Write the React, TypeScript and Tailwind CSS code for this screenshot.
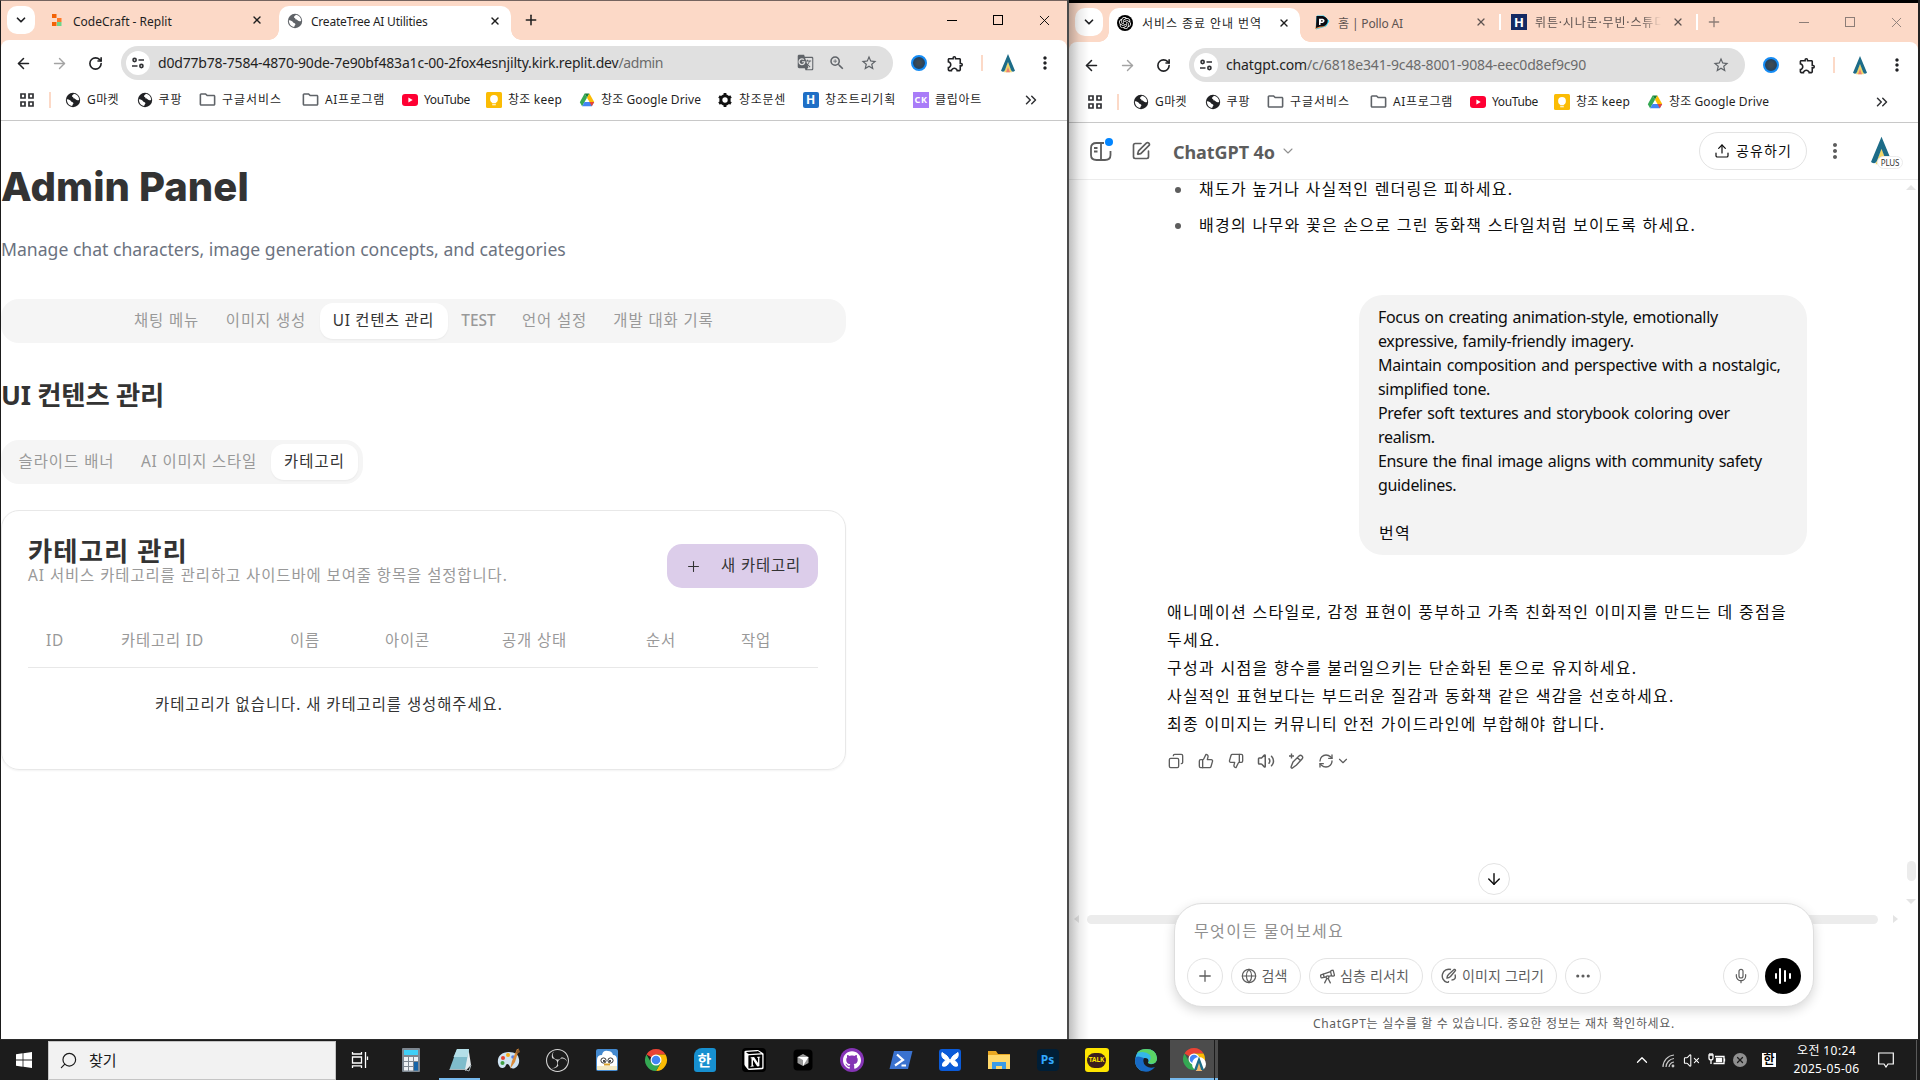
import React from "react";
import {
  ArrowDown, ArrowLeft, ArrowRight, ChevronDown, ChevronUp, Copy, Ellipsis, Globe, Mic,
  Plus, RefreshCw, RotateCw, Search, SquarePen, Telescope, ThumbsDown, ThumbsUp, Upload,
  Volume2, VolumeX, X, ChevronsRight,
} from "lucide-react";
import { MdGTranslate, MdMoreVert, MdOutlineExtension, MdOutlineFolder, MdStarBorder, MdZoomIn } from "react-icons/md";
import { SiOpenai, SiNotion, SiGithub, SiObsstudio } from "react-icons/si";

type Box = { className?: string };

const GlobeDisc = ({ className = "text-[#202124]" }: Box) => (
  <svg viewBox="0 0 16 16" className={`size-4 ${className}`}>
    <circle cx="8" cy="8" r="7.2" fill="currentColor" />
    <path d="M1.8 7.2C4 7 5.2 8 6.2 9.4c1 1 2.3.6 2.2 2-.1 1-1.2 1-1.2 2.6C4.200 13.600 1.900 11 1.800 7.200Z" fill="#fff" />
    <path d="M9 1.800C8 2.800 7 3 7 4.200c0 1 1.600.6 1.500 1.800-.1 1.100 1.800.8 2.400 1.500 1 1 2 .7 3.300.4C14 4.600 12 2.200 9 1.800Z" fill="#fff" />
  </svg>
);

const SiteInfo = () => (
  <svg viewBox="0 0 14 14" className="size-3.5" fill="none" stroke="#303134" strokeWidth="1.600">
    <circle cx="3.600" cy="4" r="1.600" />
    <path d="M7.500 4H13M1 10h5.500" />
    <circle cx="10.400" cy="10" r="1.600" />
  </svg>
);

const AppsGrid = () => (
  <svg viewBox="0 0 14 14" className="size-3.5" fill="none" stroke="#303134" strokeWidth="1.700">
    <path d="M1 1h4v4H1zM9 1h4v4H9zM1 9h4v4H1zM9 9h4v4H9z" />
  </svg>
);

const ALogo = ({ className = "w-3.5 h-[19px]" }: Box) => (
  <svg viewBox="0 0 14 19" className={className}>
    <path d="M7 7.500 11 18.300H3Z" fill="#f0d66a" />
    <path d="M7 13 9 18.300H5Z" fill="#ee8074" />
    <path d="M7 0 14 16.800Q11 18.800 10 16L7 8 4 16Q3 18.800 0 16.800Z" fill="#1d6c88" />
  </svg>
);

const YouTube = () => (
  <svg viewBox="0 0 16 12" className="h-3 w-4">
    <rect width="16" height="12" rx="3" fill="#ff0033" />
    <path d="M6.400 3.500v5L10.700 6Z" fill="#fff" />
  </svg>
);

const Keep = () => (
  <svg viewBox="0 0 16 16" className="size-4">
    <rect width="16" height="16" rx="1.500" fill="#fbbc04" />
    <circle cx="8" cy="7" r="3.900" fill="#fff" />
    <path d="M6.200 10h3.600v1.300H6.200zM6.200 12.200h3.600v1.100H6.200z" fill="#fff" />
  </svg>
);

const Drive = () => (
  <svg viewBox="0 0 16 16" className="size-4">
    <path d="M5.600 1.500h4.800L8 5.700Z" fill="#188038" />
    <path d="M5.600 1.500 8 5.700 3.100 14.300.8 10.300Z" fill="#34a853" />
    <path d="M10.400 1.500 15.200 10H10.500L8 5.700Z" fill="#fbbc04" />
    <path d="M5.500 10h9.700l-2.400 4.300H3.100Z" fill="#4285f4" />
    <path d="M10.500 10h4.700l-2.400 4.300Z" fill="#ea4335" />
  </svg>
);

const Gear = () => (
  <svg viewBox="0 0 16 16" className="size-4" fill="none" stroke="#111">
    <circle cx="8" cy="8" r="4.200" strokeWidth="3" />
    <path d="M8 1v3M8 12v3M2 4.500l2.500 1.500M11.500 10l2.500 1.500M14 4.500 11.500 6M4.500 10 2 11.500" strokeWidth="2.800" />
  </svg>
);

const Letter = ({ children, className = "" }: { children: string; className?: string }) => (
  <span className={`flex size-4 items-center justify-center font-bold leading-none text-white ${className}`}>{children}</span>
);

const Folder = () => <MdOutlineFolder className="size-[19px] -ml-1 -mr-0.5 shrink-0 text-[#5f6368]" />;

const bookmarks: { label: string; icon: React.ReactNode; cls: string }[] = [
  { label: "G마켓", icon: <GlobeDisc />, cls: "w-[71.500px] tracking-[0.390px]" },
  { label: "쿠팡", icon: <GlobeDisc />, cls: "w-[63.500px] tracking-[0.960px]" },
  { label: "구글서비스", icon: <Folder />, cls: "w-[103px] tracking-[0.960px]" },
  { label: "AI프로그램", icon: <Folder />, cls: "w-[99px] tracking-[0.680px]" },
  { label: "YouTube", icon: <YouTube />, cls: "w-[84px] tracking-[-0.360px]" },
  { label: "창조 keep", icon: <Keep />, cls: "w-[93px] tracking-[0.210px]" },
  { label: "창조 Google Drive", icon: <Drive />, cls: "w-[138px] tracking-[0.100px]" },
  { label: "창조문센", icon: <Gear />, cls: "w-[86px] tracking-[0.710px]" },
  { label: "창조트리기획", icon: <Letter className="rounded-[2px] bg-[#1f6fc6] text-[12px]">H</Letter>, cls: "w-[110px] tracking-[0.790px]" },
  { label: "클립아트", icon: <Letter className="bg-[#a97cf8] text-[9px]">CK</Letter>, cls: "w-[75px] tracking-[0.710px]" },
];

const BookmarkBar = ({ count }: { count: number }) => (
  <div className="flex h-10 items-center border-b border-[#c8c8c8] pb-0.5 text-[12px] text-[#1f1f1f]">
    <div className="ml-[19px]"><AppsGrid /></div>
    <div className="ml-[15px] mr-3.5 h-4 w-0.5 bg-[#fcd9c7]" />
    {bookmarks.slice(0, count).map((b) => (
      <div key={b.label} className={`flex shrink-0 items-center gap-1.5 whitespace-nowrap ${b.cls}`}>
        <span className="flex w-4 shrink-0 items-center justify-center">{b.icon}</span>
        <span>{b.label}</span>
      </div>
    ))}
    <ChevronsRight className="ml-auto mr-[27px] size-[18px] text-[#303134]" strokeWidth={2} />
  </div>
);

const Extensions = () => (
  <>
    <div className="ml-2 flex w-9 justify-center">
      <div className="size-4 rounded-full border-2 border-[#158cf5] bg-[radial-gradient(circle,#3f4a53_20%,#1d4164_80%)]" />
    </div>
    <div className="flex w-9 justify-center pl-px"><MdOutlineExtension className="size-[19px] text-[#202124]" /></div>
    <div className="ml-2 h-4 w-0.5 bg-[#fcd9c7]" />
    <div className="ml-[7px] flex w-9 justify-center"><ALogo /></div>
    <div className="ml-px flex w-9 justify-center"><MdMoreVert className="size-5 text-[#202124]" /></div>
  </>
);

const Toolbar = ({ pill, children }: { pill: string; children: React.ReactNode }) => (
  <div className="flex h-[46px] items-center">
    <div className="ml-1 flex w-9 justify-center"><ArrowLeft className="size-[17px] text-[#202124]" strokeWidth={2.200} /></div>
    <div className="flex w-9 justify-center"><ArrowRight className="size-[17px] text-[#a3a3a3]" strokeWidth={2} /></div>
    <div className="flex w-9 justify-center"><RotateCw className="size-[15px] text-[#202124]" strokeWidth={2.600} /></div>
    <div className={`ml-2 flex h-[34px] items-center rounded-full bg-[#e0e0e0] pl-[5px] pr-2 text-[14px] ${pill}`}>
      <span className="mr-2 flex size-6 items-center justify-center rounded-full bg-white"><SiteInfo /></span>
      {children}
    </div>
    <Extensions />
  </div>
);

const TabSearch = () => (
  <div className="ml-1.5 mt-[5px] flex size-7 items-center justify-center rounded-[10px] bg-white">
    <ChevronDown className="size-3.5 text-[#202124]" strokeWidth={3} />
  </div>
);

const ActiveTab = ({ className, children }: { className: string; children: React.ReactNode }) => (
  <div className={`relative mt-[5px] flex h-[34px] items-center rounded-t-[10px] bg-white pb-[5px] pl-2 pr-[10px] ${className}`}>
    <span className="absolute -left-2.5 bottom-0 size-2.5 bg-[radial-gradient(circle_at_top_left,transparent_9.500px,#fff_10px)]" />
    {children}
    <span className="absolute -right-2.5 bottom-0 size-2.5 bg-[radial-gradient(circle_at_top_right,transparent_9.500px,#fff_10px)]" />
  </div>
);

const WindowButtons = ({ className }: { className: string }) => (
  <div className={`ml-auto flex h-[38px] items-center ${className}`}>
    <span className="flex w-[46.500px] justify-center"><span className="h-px w-2.5 bg-current" /></span>
    <span className="flex w-[46.500px] justify-center"><span className="size-2.5 border border-current" /></span>
    <span className="flex w-[46.500px] justify-center"><X className="size-[17px]" strokeWidth={1.300} /></span>
  </div>
);

const LeftWindow = () => (
  <div className="flex w-[1067px] flex-col border-l border-t border-l-[#1b1b1b] border-t-[#75645f] bg-white">
    <div className="flex h-[39px] bg-[#fcd9c7] text-[12px] text-[#1f1f1f]">
      <TabSearch />
      <div className="flex h-[38px] w-[244px] items-center pl-4 pr-4">
        <svg viewBox="0 0 12 14" className="h-3.5 w-3">
          <path d="M1 1h4.500v4H1zM1 9h4.500v4H1z" fill="#f26207" />
          <path d="M6 5h4.500v4H6z" fill="#ff7a2a" />
          <path d="M6 9h4.500v4H6z" fill="#6ed58a" />
        </svg>
        <span className="ml-2.5 mt-[3px]">CodeCraft - Replit</span>
        <X className="ml-auto size-3" strokeWidth={2.800} />
      </div>
      <ActiveTab className="w-[232px]">
        <GlobeDisc className="text-[#5f6368]" />
        <span className="ml-2 mt-[3px] tracking-[-0.220px]">CreateTree AI Utilities</span>
        <X className="ml-auto size-3" strokeWidth={2.800} />
      </ActiveTab>
      <div className="ml-1.5 flex h-[38px] w-7 items-center justify-center"><Plus className="size-4" strokeWidth={2.300} /></div>
      <WindowButtons className="-mr-px text-black" />
    </div>
    <div className="bg-[#fcd9c7]">
      <div className="rounded-t-[8px] bg-white">
        <Toolbar pill="w-[772px]">
          <span className="tracking-[-0.180px] text-[#1f1f1f]">d0d77b78-7584-4870-90de-7e90bf483a1c-00-2fox4esnjilty.kirk.replit.dev</span>
          <span className="tracking-[-0.400px] text-[#6b6b6b]">/admin</span>
          <span className="ml-auto flex text-[#5f6368]">
            <span className="flex w-8 justify-center"><MdGTranslate className="size-[17px]" /></span>
            <span className="flex w-8 justify-center"><MdZoomIn className="size-[18px]" /></span>
            <span className="flex w-8 justify-center"><MdStarBorder className="size-[18px]" /></span>
          </span>
        </Toolbar>
      </div>
    </div>
    <div className="-mt-[5px]"><BookmarkBar count={10} /></div>
    <AdminPage />
  </div>
);

const mainTabs = [
  { label: "채팅 메뉴", cls: "w-[92px] tracking-[0.870px]" },
  { label: "이미지 생성", cls: "w-[107px] tracking-[0.920px]" },
  { label: "UI 컨텐츠 관리", cls: "w-[128px] tracking-[0.680px]", on: true },
  { label: "TEST", cls: "w-[62px] font-medium" },
  { label: "언어 설정", cls: "w-[90px] tracking-[0.920px]" },
  { label: "개발 대화 기록", cls: "w-[128px] tracking-[0.920px]" },
];
const subTabs = [
  { label: "슬라이드 배너", cls: "w-[121px] tracking-[1.010px]" },
  { label: "AI 이미지 스타일", cls: "w-[144px] tracking-[0.800px]" },
  { label: "카테고리", cls: "w-[87px] tracking-[1.090px]", on: true },
];
const columns = ["ID", "카테고리 ID", "이름", "아이콘", "공개 상태", "순서", "작업"];

const Tab = ({ label, cls, on }: { label: string; cls: string; on?: boolean }) => (
  <div className={`flex h-9 items-center justify-center whitespace-nowrap rounded-[13px] ${on ? "bg-white text-[#333] shadow-xs" : ""} ${cls}`}>{label}</div>
);

const AdminPage = () => (
  <main className="flex flex-col text-[15.400px] text-[#999]">
    <h1 className="mt-[46px] flex h-10 items-center font-[Inter] text-[40px] font-extrabold tracking-[0.050px] text-[#333]">Admin Panel</h1>
    <p className="mt-[29px] flex h-7 items-center text-[17.600px] text-[#6b7280]">Manage chat characters, image generation concepts, and categories</p>
    <div className="mt-[35px] flex h-11 w-[845px] items-center justify-center rounded-[18px] bg-[#f5f5f5] pl-px">
      {mainTabs.map((t) => <Tab key={t.label} {...t} />)}
    </div>
    <h2 className="mt-8 flex h-10 items-center text-[26.400px] font-bold tracking-[-0.250px] text-[#333]">UI 컨텐츠 관리</h2>
    <div className="mt-[25px] flex h-11 w-[362px] items-center rounded-[18px] bg-[#f5f5f5] pl-[5px]">
      {subTabs.map((t) => <Tab key={t.label} {...t} />)}
    </div>
    <section className="mt-[26px] h-[260px] w-[845px] rounded-[18px] border border-[#e8e8e8] pl-[26px] pr-[27px] shadow-xs">
      <div className="flex items-start justify-between">
        <div className="pt-[26px]">
          <h3 className="flex h-7 items-center text-[26.400px] font-bold tracking-[1.050px] text-[#333]">카테고리 관리</h3>
          <p className="flex h-[22px] items-center tracking-[0.950px]">AI 서비스 카테고리를 관리하고 사이드바에 보여줄 항목을 설정합니다.</p>
        </div>
        <div className="mt-[33px] flex h-11 w-[151px] items-center rounded-[15px] bg-[#dccdea] pl-[18px] tracking-[0.870px] text-[#333]">
          <Plus className="mr-[19px] size-[17px]" strokeWidth={1.500} />
          <span>새 카테고리</span>
        </div>
      </div>
      <div className="mt-[25px] grid h-[55px] grid-cols-[75px_169px_95px_117px_144px_95px_auto] items-center border-b border-[#e8e8e8] pl-[18px] pt-0.5 tracking-[0.870px]">
        {columns.map((c) => <span key={c}>{c}</span>)}
      </div>
      <p className="mt-[25px] flex h-6 items-center pl-[127px] tracking-[0.970px] text-[#333]">카테고리가 없습니다. 새 카테고리를 생성해주세요.</p>
    </section>
  </main>
);

const RightWindow = () => (
  <div className="relative flex w-[849px] flex-col border-t-[3px] border-t-black bg-white">
    <div className="flex h-[39px] bg-[#fcd9c7] text-[12px] text-[#1f1f1f]">
      <TabSearch />
      <div className="w-1.5" />
      <ActiveTab className="w-[191px]">
        <span className="flex size-4 items-center justify-center rounded-full bg-black text-white"><SiOpenai className="size-3" /></span>
        <span className="ml-[9px] mt-[3px] whitespace-nowrap tracking-[0.940px]">서비스 종료 안내 번역</span>
        <X className="ml-auto size-3 shrink-0" strokeWidth={2.800} />
      </ActiveTab>
      <div className="flex h-[38px] w-[199px] items-center pl-3.5 pr-3 text-[#5e5451]">
        <svg viewBox="0 0 16 15" className="h-[15px] w-4">
          <path d="M3 1h7l5 5-3 5-10 3Z" fill="#38d5f5" stroke="#38d5f5" strokeLinejoin="round" />
          <path d="M1 14 3 7l9 4Z" fill="#ff8a3d" />
          <path d="M2.500 1h6.500Q15 3 13.500 7.500T6 11.500L2 13Z" fill="#0b0b12" />
          <path d="M5 10V3.800h3.600q2 .4 2 2t-2 2.200H6.500V10Z" fill="#fff" />
          <path d="M7 5.200h1.700v1.300H7z" fill="#111" />
        </svg>
        <span className="ml-2 mt-[3px] tracking-[-0.140px]">홈 | Pollo AI</span>
        <X className="ml-auto size-3" strokeWidth={2.500} />
      </div>
      <div className="mt-[11px] h-4 w-0.5 bg-white" />
      <div className="flex h-[38px] w-[195px] items-center pl-2.5 pr-3 text-[#5e5451]">
        <Letter className="bg-[#142a63] text-[13px]">H</Letter>
        <span className="ml-2 mt-0.5 w-[126px] overflow-hidden whitespace-nowrap leading-5 tracking-[0.850px] [mask-image:linear-gradient(90deg,#000_85%,transparent)]">뤼튼·시나몬·무빈·스튜디</span>
        <X className="ml-auto size-3" strokeWidth={2.500} />
      </div>
      <div className="mt-[11px] h-4 w-0.5 bg-white" />
      <div className="ml-1 flex h-[38px] w-6 items-center justify-center text-[#8c7d77]"><Plus className="size-4" strokeWidth={2} /></div>
      <WindowButtons className="-mr-0.5 text-[#8c7d77]" />
    </div>
    <div className="bg-[#fcd9c7]">
      <div className="rounded-t-[8px] bg-white">
        <Toolbar pill="w-[556px]">
          <span className="tracking-[-0.140px] text-[#6b6b6b]"><span className="text-[#1f1f1f]">chatgpt.com</span>/c/6818e341-9c48-8001-9084-eec0d8ef9c90</span>
          <span className="ml-auto flex w-8 justify-center text-[#5f6368]"><MdStarBorder className="size-[18px]" /></span>
        </Toolbar>
      </div>
    </div>
    <div className="-mt-[5px]"><BookmarkBar count={7} /></div>
    <ChatPage />
    <div className="absolute inset-y-0 left-0 w-5 bg-gradient-to-r from-black/25 via-black/8 to-transparent" />
  </div>
);

const promptText = [
  "Focus on creating animation-style, emotionally",
  "expressive, family-friendly imagery.",
  "Maintain composition and perspective with a nostalgic,",
  "simplified tone.",
  "Prefer soft textures and storybook coloring over",
  "realism.",
  "Ensure the final image aligns with community safety",
  "guidelines.",
];
const answer = [
  "애니메이션 스타일로, 감정 표현이 풍부하고 가족 친화적인 이미지를 만드는 데 중점을",
  "두세요.",
  "구성과 시점을 향수를 불러일으키는 단순화된 톤으로 유지하세요.",
  "사실적인 표현보다는 부드러운 질감과 동화책 같은 색감을 선호하세요.",
  "최종 이미지는 커뮤니티 안전 가이드라인에 부합해야 합니다.",
];

const Bullet = ({ text, className }: { text: string; className: string }) => (
  <li className={`flex items-center whitespace-nowrap ${className}`}>
    <span className="ml-[106px] mr-[18px] mt-px size-1.5 rounded-full bg-[#5d5d5d]" />
    {text}
  </li>
);

const Chip = ({ className, children }: { className: string; children: React.ReactNode }) => (
  <div className={`flex h-9 items-center justify-center rounded-full border border-[#e3e3e3] ${className}`}>{children}</div>
);

const ChatPage = () => (
  <main className="relative flex grow flex-col text-[16px] text-[#0d0d0d]">
    <header className="flex h-[57px] items-center border-b border-[#ececec] text-[#5d5d5d]">
      <div className="relative ml-[21px]">
        <svg viewBox="0 0 22 19" className="h-[19px] w-[22px]" fill="none" stroke="currentColor" strokeWidth="1.800">
          <path d="M14 1H6.500Q1 1 1 6v7q0 5 5.500 5H15q5.500 0 5.500-5V9" />
          <path d="M11 1v17M4 6h3.500M4 9.500h3.500" />
        </svg>
        <span className="absolute -right-px -top-1 size-2 rounded-full bg-[#0285ff]" />
      </div>
      <SquarePen className="ml-[19px] size-5" strokeWidth={2} />
      <h1 className="ml-[22px] mt-0.5 whitespace-nowrap text-[18px] font-bold tracking-[-0.070px]">ChatGPT 4o</h1>
      <ChevronDown className="ml-[5px] size-4 text-[#8f8f8f]" strokeWidth={1.600} />
      <Chip className="ml-auto h-[38px] w-[108px] gap-1.5 text-[14px] tracking-[1.120px] text-[#0d0d0d]">
        <Upload className="size-4" strokeWidth={1.800} />공유하기
      </Chip>
      <MdMoreVert className="ml-4 size-6" />
      <div className="relative ml-6 mr-[26px]">
        <ALogo className="h-[30px] w-[21px]" />
        <span className="absolute left-1.5 top-5 flex h-[13px] w-[26px] items-center justify-center rounded-full border border-[#ececec] bg-white text-[8px] leading-none tracking-[-0.200px] text-[#333]">PLUS</span>
      </div>
    </header>

    <ul className="-mt-px">
      <Bullet text="채도가 높거나 사실적인 렌더링은 피하세요." className="h-5 tracking-[1.230px]" />
      <Bullet text="배경의 나무와 꽃은 손으로 그린 동화책 스타일처럼 보이도록 하세요." className="mt-4 h-5 tracking-[1.280px]" />
    </ul>

    <div className="ml-[290px] mt-[60px] h-[260px] w-[448px] rounded-[24px] bg-[#f3f3f3] pl-[19px] pt-2.5 leading-6 tracking-[-0.330px] [word-spacing:1.200px]">
      {promptText.map((l) => <p key={l} className="whitespace-nowrap">{l}</p>)}
      <p className="pl-px pt-6 tracking-[1.280px]">번역</p>
    </div>

    <div className="ml-[98px] mt-[43px] leading-7 tracking-[1.280px]">
      {answer.map((l) => <p key={l} className="whitespace-nowrap">{l}</p>)}
    </div>
    <div className="ml-[99px] mt-[13px] flex h-5 items-center gap-3.5 text-[#5d5d5d]">
      <Copy className="size-4 -scale-x-100" strokeWidth={2} />
      <ThumbsUp className="size-4" strokeWidth={2} />
      <ThumbsDown className="size-4" strokeWidth={2} />
      <Volume2 className="size-[18px] -mx-px" strokeWidth={2} />
      <svg viewBox="0 0 16 16" className="size-4" fill="none" stroke="currentColor" strokeWidth="1.400">
        <path d="M3.500.5v5M1 3h5" />
        <path d="m5 9 6-6q1.500-1.500 3 0t0 3L8.500 12 4 15.200Q2.800 15 3.200 13.500Z M9.500 4.800l2.800 2.800" />
      </svg>
      <span className="flex items-center gap-0.5">
        <RefreshCw className="size-4" strokeWidth={2} />
        <ChevronDown className="size-3.5" strokeWidth={2} />
      </span>
    </div>

    <div className="ml-[409px] mt-[92px] flex size-8 items-center justify-center rounded-full border border-[#e3e3e3]">
      <ArrowDown className="size-[18px]" strokeWidth={1.900} />
    </div>

    <div className="relative z-10 ml-[105px] mt-2 flex h-[104px] w-[640px] flex-col rounded-[28px] border border-[#dedede] bg-white px-3 shadow-[0_4px_12px_rgba(0,0,0,0.16)]">
      <p className="mt-[15px] flex h-6 items-center pl-[7px] tracking-[1.350px] text-[#8f8f8f]">무엇이든 물어보세요</p>
      <div className="mt-[15px] flex items-center text-[14px] text-[#5d5d5d]">
        <Chip className="w-9"><Plus className="size-[18px]" strokeWidth={1.700} /></Chip>
        <Chip className="ml-2 w-[70px] gap-[5px] pr-1"><Globe className="size-4" strokeWidth={1.800} />검색</Chip>
        <Chip className="ml-2 w-[114px] gap-1 pr-1 tracking-[0.160px]"><Telescope className="size-[17px]" strokeWidth={1.800} />심층 리서치</Chip>
        <Chip className="ml-2 w-[126px] gap-[5px] pr-[3px] tracking-[0.150px]">
          <svg viewBox="0 0 16 16" className="size-4" fill="none" stroke="currentColor" strokeWidth="1.400">
            <path d="M10 1.500A6.600 6.600 0 1 0 6 14.400q1.800.2 1.400-1.400M14 6.500Q15.500 12 10.500 12" />
            <path d="M6 10q0-2 1.500-3.500L13 1.500q1.500-.5 1.500 1L9.500 8.500Q8 10 6 10Z M4.500 6.500h.1" />
          </svg>
          이미지 그리기
        </Chip>
        <Chip className="ml-2 w-9"><Ellipsis className="size-[18px]" strokeWidth={2.200} /></Chip>
        <Chip className="ml-auto w-9"><Mic className="size-4" strokeWidth={1.800} /></Chip>
        <div className="ml-1.5 flex size-9 items-center justify-center gap-[2px] rounded-full bg-black">
          <span className="h-1.5 w-[2px] rounded-full bg-white" />
          <span className="h-4 w-[2px] rounded-full bg-white" />
          <span className="mx-px h-3 w-[2px] rounded-full bg-white" />
          <span className="h-1.5 w-[2px] rounded-full bg-white" />
        </div>
      </div>
    </div>
    <p className="mt-[7px] flex h-5 items-center justify-center pl-px text-[12px] tracking-[0.700px] text-[#5d5d5d]">ChatGPT는 실수를 할 수 있습니다. 중요한 정보는 재차 확인하세요.</p>

    <div className="absolute bottom-[115px] left-[5px] flex h-2.5 w-[824px] items-center">
      <span className="border-y-4 border-r-[5px] border-y-transparent border-r-[#e4e4e4]" />
      <span className="ml-2 h-[9px] w-[791px] rounded-full bg-[#ececec]" />
      <span className="ml-auto border-y-4 border-l-[5px] border-y-transparent border-l-[#e4e4e4]" />
    </div>
    <div className="absolute right-0.5 top-[62px] flex h-[719px] w-[10px] flex-col items-center">
      <span className="border-x-[5px] border-b-[5px] border-x-transparent border-b-[#e4e4e4]" />
      <span className="mt-auto h-5 w-[9px] rounded-full bg-[#ececec]" />
      <span className="mt-[18px] border-x-[5px] border-t-[5px] border-x-transparent border-t-[#e4e4e4]" />
    </div>
  </main>
);

const Chrome = ({ badge }: { badge?: boolean }) => (
  <svg viewBox="0 0 24 24" className="size-6">
    <path d="M12 12 2.470 6.500A11 11 0 0 1 21.530 6.500H12Z" fill="#ea4335" />
    <path d="M21.530 6.500A11 11 0 0 1 12 23L16.760 14.750 12 6.500Z" fill="#fbbc04" />
    <path d="M12 23A11 11 0 0 1 2.470 6.500L7.240 14.750H16.760Z" fill="#34a853" />
    <circle cx="12" cy="12" r="5.500" fill="#fff" />
    <circle cx="12" cy="12" r="4.300" fill="#4285f4" />
    {badge && (
      <g>
        <circle cx="17" cy="17" r="7" fill="#fff" />
        <path d="M17 13.500 19.800 24H14.200Z" fill="#f0b66a" />
        <path d="m17 9.500 5 13.500h-2.800L17 16l-2.200 7H12Z" fill="#1d6c88" />
      </g>
    )}
  </svg>
);

const Ico = ({ children }: { children: React.ReactNode }) => <svg viewBox="0 0 24 24" className="size-6">{children}</svg>;

const apps: React.ReactNode[] = [
  <Ico>
    <rect x="3" y="0" width="18" height="24" rx="1" fill="#7d8790" />
    <rect x="5" y="2" width="14" height="5" fill="#3fd0f7" />
    <path d="M5 9h4v4H5zM10 9h4v4h-4zM15 9h4v4h-4zM5 14h4v4H5zM10 14h4v4h-4zM5 19h4v3.500H5zM10 19h4v3.500h-4z" fill="#eef2f5" />
    <path d="M15 14h4v8.500h-4z" fill="#1565a9" />
  </Ico>,
  <Ico>
    <path d="M9 1h11.500L23 17l-5.500 6Z" fill="#e4ebee" />
    <path d="M9 1h12L17 21.500H1.500Z" fill="#7fbccb" />
    <path d="M9 1h12l-1.500 8H5.500Z" fill="#b4dfe8" />
    <path d="M1.500 21.500H17L21 23l2-6" fill="none" stroke="#a9b4b8" />
  </Ico>,
  <Ico>
    <path d="M12 4C4 4 0 9 1 15q1 5.500 5 5 2.500-.5 3-3 1-2 3 0 2 5 6 3 5-3 4-9Q21 4 12 4Z" fill="#cfe4f3" />
    <circle cx="6" cy="10" r="2" fill="#e5432f" /><circle cx="11" cy="7" r="2" fill="#f5b021" />
    <circle cx="5.500" cy="15" r="2" fill="#3f9f45" /><circle cx="16" cy="9" r="1.800" fill="#5b7fe0" />
    <path d="m22 1-2 0-5 12-2 8 5-7Z" fill="#d98b3b" />
    <path d="m21.500 0 1.500 4-3 2-1-1.500Z" fill="#8a5a2b" />
  </Ico>,
  <SiObsstudio className="size-[23px] text-[#d6d6d6]" />,
  <Ico>
    <rect x="1" y="1" width="22" height="22" rx="2" fill="#4389cf" />
    <path d="M2 12Q2 7 7 7q1-5 6-4 4 0 5 4 4 0 4 5v6H2Z" fill="#fff" />
    <circle cx="8.500" cy="12.500" r="2.600" fill="#fff" stroke="#333" /><circle cx="15.500" cy="12.500" r="2.600" fill="#fff" stroke="#333" />
    <circle cx="9" cy="13" r="1" fill="#111" /><circle cx="15" cy="13" r="1" fill="#111" />
    <path d="M2 18h20v4H2z" fill="#f4e9c2" /><path d="M9 16.500h6" stroke="#d8a028" strokeWidth="2" />
  </Ico>,
  <Chrome />,
  <span className="flex h-6 w-[22px] items-center justify-center rounded-[3px] rounded-tl-[8px] bg-[#1790d0] text-[15px] font-bold leading-none text-white">한</span>,
  <span className="flex size-6 items-center justify-center rounded-[4px] bg-black"><SiNotion className="size-5 text-white" /></span>,
  <Ico>
    <rect x="2.500" y="1.500" width="19" height="21" rx="4" fill="#000" />
    <path d="m12 6 5.500 3v6L12 18l-5.500-3V9Z" fill="#9a9a9a" />
    <path d="M6.500 9h11L12 18v-6Z" fill="#fff" />
  </Ico>,
  <span className="flex size-6 items-center justify-center rounded-full bg-[#8534b5]"><SiGithub className="size-[18px] text-white" /></span>,
  <Ico>
    <path d="M5 3h18.500L19 21H.5Z" fill="#3a72cf" />
    <path d="m8 6.500 6 5.500-8 5.500M12.500 17.500H17" fill="none" stroke="#fff" strokeWidth="2.200" />
  </Ico>,
  <Ico>
    <rect x="1" y="1" width="22" height="22" rx="3" fill="#0b5bd8" />
    <path d="M12 12.500Q10 7.500 4 4.500q-1.500 6.500 5 7.500-5 1.500-4.500 6Q9.500 19.500 12 12.500Zm0 0Q14 7.500 20 4.500q1.500 6.500-5 7.500 5 1.500 4.500 6Q14.500 19.500 12 12.500Z" fill="#fff" stroke="#fff" />
  </Ico>,
  <Ico>
    <path d="M1 3h8l2 3h12v15H1Z" fill="#e9a823" /><path d="M1 7h22v14H1Z" fill="#ffd86b" />
    <path d="M5 21v-7h14v7h-4v-3H9v3Z" fill="#3b9be6" />
  </Ico>,
  <span className="flex size-[22px] items-center justify-center rounded-[4px] bg-[#001e36] text-[12px] font-bold leading-none text-[#31a8ff]">Ps</span>,
  <span className="flex size-6 items-center justify-center rounded-[3px] bg-[#fee500]">
    <span className="flex h-[15px] w-[19px] items-center justify-center rounded-full bg-[#3c1e1e] text-[6.500px] font-bold leading-none text-[#fee500]">TALK</span>
  </span>,
  <Ico>
    <path d="M23 10Q22 1 12 1T1 12q0 9 8 11.300Q3 17 8 11q3-2 6 0 1 2 0 4 2 2 6 .5 3-2 3-5.500Z" fill="#35b8e8" />
    <path d="M23 10Q22 1 12 1 6 1 3 5q8-3 13 2 2 4-2 8 9 2.500 9-5Z" fill="#5ad465" />
    <path d="M1 12q0 9 8 11.300 7 1.700 12-4.300-5 2-9-1t-2-8Q1 6 1 12Z" fill="#1769c4" />
  </Ico>,
];

const Taskbar = () => (
  <footer className="flex h-10 items-center bg-[#1c1c1c] text-white">
    <svg viewBox="0 0 16 16" className="ml-4 size-4" fill="#fff"><path d="M0 2.300 6.600 1.300V7.600H0zM7.400 1.200 16 0v7.600H7.400zM0 8.400h6.600v6.300L0 13.700zM7.400 8.400H16V16l-8.600-1.200z" /></svg>
    <div className="ml-4 flex h-[39px] w-[288px] items-center border border-[#c5c5c5] bg-[#f2f2f2] pl-2.5 text-[15px] text-[#1b1b1b]">
      <Search className="size-[19px] -scale-x-100" strokeWidth={1.500} />
      <span className="ml-[11px]">찾기</span>
    </div>
    <svg viewBox="0 0 18 16" className="ml-[15px] h-4 w-[18px]" fill="none" stroke="#fff" strokeWidth="1.300">
      <path d="M1.500 5h9v6h-9zM1.500 0v2h9V0M1.500 16v-2.200h9V16M14.500 0v16M16.500 4.500V8" />
    </svg>
    <div className="ml-[17px] flex h-full">
      {apps.map((icon, i) => (
        <div key={i} className={`flex h-full w-[49px] items-center justify-center ${i === 1 ? "bg-[linear-gradient(#76b9ed,#76b9ed)] bg-[length:41px_2px] bg-bottom bg-no-repeat" : ""}`}>{icon}</div>
      ))}
    </div>
    <div className="flex h-full w-11 items-center justify-center border-b-2 border-[#76b9ed] bg-[#4c4c4c] pl-1"><Chrome badge /></div>
    <div className="ml-px h-full w-[3px] border-b-2 border-[#76b9ed] bg-[#4c4c4c]" />
    <div className="ml-auto flex h-full items-center">
      <ChevronUp className="mr-px size-[18px]" strokeWidth={1.700} />
      <svg viewBox="0 0 16 16" className="ml-2 size-4" fill="none" stroke="#c9c9c9" strokeWidth="1.200">
        <path d="M3 15A12 12 0 0 1 14 3M6 15A9 9 0 0 1 14 6.500M9 15a6 6 0 0 1 5-5" /><circle cx="13" cy="14" r=".8" fill="#fff" />
      </svg>
      <VolumeX className="ml-[7px] size-[17px]" strokeWidth={1.500} />
      <svg viewBox="0 0 18 16" className="ml-2 h-4 w-[18px]" fill="none" stroke="#fff" strokeWidth="1.300">
        <path d="M7 4.500h9v7H5.500M16.500 6.500v3" /><path d="M1 3v3q0 2 2 2t2-2V3ZM3 8v4M2 1v2M4 1v2" /><path d="M8.500 6.500h5v3h-5z" fill="#fff" />
      </svg>
      <span className="ml-[7px] flex size-3.5 items-center justify-center rounded-full bg-[#8f8f8f]"><X className="size-2.5 text-[#1c1c1c]" strokeWidth={3} /></span>
      <span className="ml-[15px] flex size-3.5 items-center justify-center bg-white text-[12px] font-bold leading-none text-black">한</span>
      <div className="ml-[17px] flex w-[67px] flex-col items-center text-[12px] leading-[18px]">
        <span className="whitespace-nowrap tracking-[0.390px]">오전 10:24</span>
        <span className="whitespace-nowrap tracking-[0.340px]">2025-05-06</span>
      </div>
      <svg viewBox="0 0 16 16" className="ml-[18px] size-4" fill="none" stroke="#fff" strokeWidth="1.200"><path d="M.7 1h14.600v11H10l-2 3-2-3H.7Z" /></svg>
      <div className="ml-[22px] mr-[3px] h-full w-px bg-[#5a5a5a]" />
    </div>
  </footer>
);

export default function App() {
  return (
    <div className="flex h-[1080px] w-[1920px] flex-col overflow-hidden bg-[#1c1c1c] font-['Noto_Sans','Noto_Sans_CJK_KR',sans-serif] leading-none">
      <div className="flex h-[1039px]">
        <LeftWindow />
        <div className="w-0.5 bg-[#4a4a4a]" />
        <RightWindow />
        <div className="w-0.5 bg-[#222]" />
      </div>
      <div className="h-px bg-[#2b2b2b]" />
      <Taskbar />
    </div>
  );
}
